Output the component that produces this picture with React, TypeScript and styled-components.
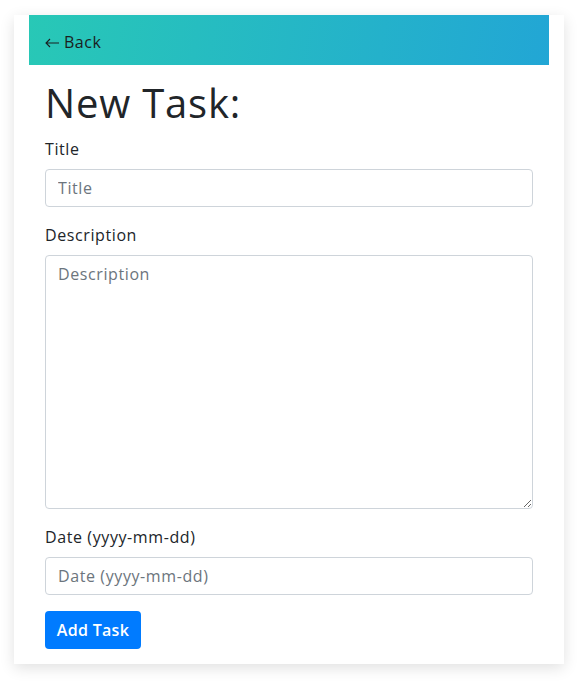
import React from 'react'
import styled, { createGlobalStyle } from 'styled-components'

const Global = createGlobalStyle`
  * { box-sizing: border-box; }
  body {
    margin: 0;
    background: #fff;
    font-family: 'Open Sans', 'Noto Sans', sans-serif;
    color: #212529;
  }
`

const Page = styled.div`
  padding: 15px 15px 20px 14px;
`

const Card = styled.div`
  width: 550px;
  background: #fff;
  box-shadow: 0 4px 14px rgba(0, 0, 0, 0.12);
  padding: 0 15px 15px;
`

const Header = styled.div`
  height: 50px;
  display: flex;
  align-items: center;
  padding: 4px 15px 0;
  background: linear-gradient(100deg, #28c8b6 0%, #22a6d5 100%);
`

const BackLink = styled.a`
  display: flex;
  align-items: center;
  gap: 4px;
  font-size: 16px;
  letter-spacing: 0.5px;
  color: #1b1e21;
  text-decoration: none;
  cursor: pointer;
`

const Form = styled.form`
  padding: 0 16px;
  display: flex;
  flex-direction: column;
`

const Heading = styled.h1`
  margin: 14px 0 10px;
  font-size: 40px;
  font-weight: 400;
  letter-spacing: 0.8px;
  line-height: 1.2;
  color: #212529;
`

const Group = styled.div`
  display: flex;
  flex-direction: column;
  margin-bottom: 16px;
`

const Label = styled.label`
  font-size: 16px;
  letter-spacing: 0.6px;
  line-height: 24px;
  margin-bottom: 8px;
`

const fieldCss = `
  width: 100%;
  border: 1px solid #ced4da;
  border-radius: 4px;
  padding: 6px 12px;
  font-family: inherit;
  font-size: 16px;
  letter-spacing: 0.6px;
  line-height: 24px;
  color: #495057;
  background: #fff;
  &::placeholder { color: #6c757d; }
`

const Input = styled.input`
  ${fieldCss}
  height: 38px;
`

const TextArea = styled.textarea`
  ${fieldCss}
  height: 254px;
  resize: vertical;
`

const Button = styled.button`
  align-self: flex-start;
  height: 38px;
  width: 96px;
  padding: 0;
  border: none;
  border-radius: 4px;
  background: #007bff;
  color: #fff;
  font-family: inherit;
  font-size: 16px;
  letter-spacing: 0.3px;
  font-weight: 600;
  cursor: pointer;
`

export default function App() {
  return (
    <Page>
      <Global />
      <Card>
        <Header>
          <BackLink>
            <svg width="16" height="12" viewBox="0 0 16 12" fill="none" stroke="#1b1e21" strokeWidth="1.1">
              <path d="M15 7H2M6 3 2 7l4 4" />
            </svg>
            Back
          </BackLink>
        </Header>
        <Form onSubmit={e => e.preventDefault()}>
          <Heading>New Task:</Heading>
          <Group>
            <Label>Title</Label>
            <Input placeholder="Title" />
          </Group>
          <Group>
            <Label>Description</Label>
            <TextArea placeholder="Description" />
          </Group>
          <Group>
            <Label>Date (yyyy-mm-dd)</Label>
            <Input placeholder="Date (yyyy-mm-dd)" />
          </Group>
          <Button type="submit">Add Task</Button>
        </Form>
      </Card>
    </Page>
  )
}
